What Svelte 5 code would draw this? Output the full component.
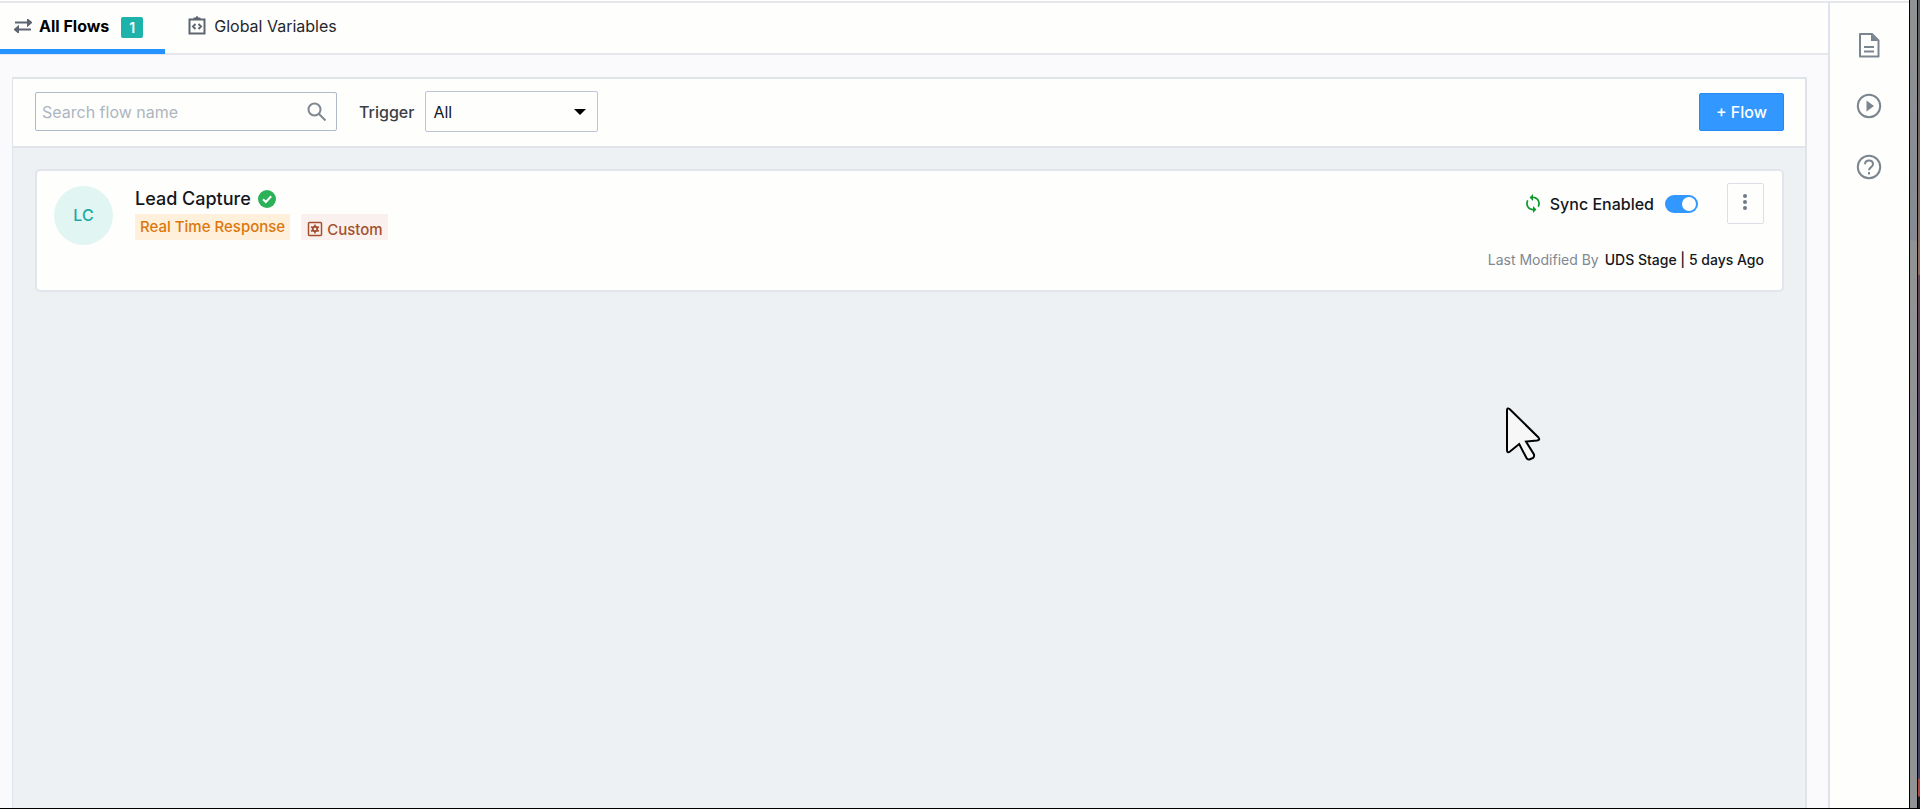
<script>
  let search = $state('');
  let trigger = $state('All');

  let flows = $state([
    {
      initials: 'LC',
      name: 'Lead Capture',
      response: 'Real Time Response',
      type: 'Custom',
      sync: true,
      author: 'UDS Stage',
      modified: '5 days Ago',
    },
  ]);
</script>

<div class="window">
  <div class="app">
    <main>
      <nav class="tabs">
        <a class="tab active" href="#flows">
          <svg class="icon-swap" viewBox="0 0 18 14" width="18" height="14" aria-hidden="true">
            <path d="M1 3.500h14M14 1 17 3.500 14 6zM17 10.500H3M4 8 1 10.500 4 13z" />
          </svg>
          All Flows
          <span class="count">{flows.length}</span>
        </a>
        <a class="tab" href="#variables">
          <svg class="icon-vars" viewBox="0 0 18 20" width="18" height="20" aria-hidden="true">
            <path d="M1.500 3.500h15v14h-15zM6.500 3.500V2.500h1.500L9 1.200l1 1.300h1.500v1M7.500 8 5 10.500 7.500 13M10.500 8 13 10.500 10.500 13" />
          </svg>
          Global Variables
        </a>
      </nav>

      <section class="panel">
        <div class="toolbar">
          <div class="search">
            <input type="text" placeholder="Search flow name" aria-label="Search flow name" bind:value={search} />
            <svg viewBox="0 0 20 20" width="20" height="20" aria-hidden="true">
              <circle cx="7.500" cy="7.500" r="6" />
              <path d="m12 12 6.500 6.500" />
            </svg>
          </div>
          <label for="trigger">Trigger</label>
          <div class="select">
            <select id="trigger" bind:value={trigger}>
              <option>All</option>
            </select>
            <svg viewBox="0 0 12 6" width="12" height="6" aria-hidden="true"><path d="M0 0h12L6 6z" /></svg>
          </div>
          <button class="add" type="button">+ Flow</button>
        </div>

        <div class="list">
          {#each flows as flow}
            <article class="card">
              <div class="avatar">{flow.initials}</div>
              <div class="info">
                <h2>
                  {flow.name}
                  <svg viewBox="0 0 18 18" width="18" height="18" role="img" aria-label="Active">
                    <circle cx="9" cy="9" r="9" fill="#2bb258" />
                    <path d="m5 9.200 2.800 2.800L13.200 6.300" fill="none" stroke="#fff" stroke-width="2" />
                  </svg>
                </h2>
                <div class="tags">
                  <span class="tag response">{flow.response}</span>
                  <span class="tag custom">
                    <svg viewBox="0 0 16 16" width="16" height="16" aria-hidden="true">
                      <rect x="1.500" y="1.500" width="13" height="13" rx="1" fill="none" stroke="currentColor" stroke-width="1.500" />
                      <circle cx="8" cy="8" r="2.300" fill="none" stroke="currentColor" stroke-width="1.800" />
                      <path d="M8 3.500v9M4.100 5.800l7.800 4.400M4.100 10.200l7.800-4.400" stroke="currentColor" stroke-width="1.600" />
                      <circle cx="8" cy="8" r="1.300" fill="#faf0ed" />
                    </svg>
                    {flow.type}
                  </span>
                </div>
              </div>
              <div class="side">
                <div class="actions">
                  <svg class="icon-sync" viewBox="4 1 16 22" width="14" height="19" aria-hidden="true">
                    <path d="M12 4V1L8 5l4 4V6c3.310 0 6 2.690 6 6 0 1.010-.250 1.970-.700 2.800l1.460 1.460A7.930 7.930 0 0 0 20 12c0-4.420-3.580-8-8-8zm0 14c-3.310 0-6-2.690-6-6 0-1.010.250-1.970.700-2.800L5.240 7.740A7.930 7.930 0 0 0 4 12c0 4.420 3.580 8 8 8v3l4-4-4-4v3z" />
                  </svg>
                  <label class="sync">
                    Sync Enabled
                    <input type="checkbox" role="switch" bind:checked={flow.sync} />
                  </label>
                  <button class="more" type="button" aria-label="More actions">
                    <svg viewBox="0 0 4 16" width="4" height="16" aria-hidden="true">
                      <circle cx="2" cy="2" r="2" /><circle cx="2" cy="8" r="2" /><circle cx="2" cy="14" r="2" />
                    </svg>
                  </button>
                </div>
                <p class="modified">Last Modified By <strong>{flow.author} | {flow.modified}</strong></p>
              </div>
            </article>
          {/each}
        </div>
      </section>
    </main>

    <aside class="rail">
      <button type="button" aria-label="Documentation">
        <svg viewBox="0 0 26 26" width="26" height="26" aria-hidden="true">
          <path d="M4 2h12l6.500 6.500v16H4zM8 15h10M8 19.500h10" />
          <path class="solid" d="M15 2v7h7z" />
        </svg>
      </button>
      <button type="button" aria-label="Videos">
        <svg viewBox="0 0 26 26" width="26" height="26" aria-hidden="true">
          <circle cx="13" cy="13" r="11.200" />
          <path class="solid" d="M10.500 7.500v11l7.500-5.500z" />
        </svg>
      </button>
      <button type="button" aria-label="Help">
        <svg viewBox="0 0 26 26" width="26" height="26" aria-hidden="true">
          <circle cx="13" cy="13" r="11.200" />
          <path d="M9 10.200c0-5 8-5 8 0 0 2.800-4 3-4 6M13 18v2.400" />
        </svg>
      </button>
    </aside>
  </div>
  <div class="frame"></div>
  <div class="desktop"></div>

  <svg class="cursor" viewBox="0 0 36 56" width="36" height="56" aria-hidden="true">
    <path d="M2 4.500Q2 1 4.800 3.300L33.500 31.500Q35.500 34 32 34.500L21 35.500 29 48.500Q29.500 50.500 28 52L24.500 53.500Q22.500 54 21.500 52L14.200 38 5 45.500Q2 47.500 2 44z" />
  </svg>
</div>

<style>
  :global(body) {
    font-family: Inter, 'Liberation Sans', sans-serif;
    font-size: 16px;
    color: #14161c;
    background: #fefefc;
  }

  .window {
    position: relative;
    display: flex;
    box-sizing: border-box;
    min-height: 100vh;
    border-bottom: 1px solid #000;
  }

  .app {
    flex: 1;
    display: flex;
    margin-top: 1px;
    border-top: 2px solid #e6e6ed;
  }

  main {
    flex: 1;
    display: flex;
    flex-direction: column;
    background: #fafafd;
  }

  .tabs {
    display: flex;
    height: 50px;
    background: #fefefc;
    border-bottom: 2px solid #e6e6ed;
  }

  .tab {
    display: flex;
    align-items: center;
    gap: 8px;
    box-sizing: border-box;
    height: 51px;
    padding: 0 22px 0 23px;
    border-bottom: 5px solid transparent;
    color: #25272e;
    text-decoration: none;
  }

  .tab.active {
    gap: 7px;
    padding-left: 14px;
    border-color: #2492ff;
    color: #000;
    font-weight: 700;
  }

  .tab svg {
    fill: none;
    stroke: #5d6670;
    stroke-width: 2;
  }

  .tab .icon-swap {
    fill: #5d6670;
    stroke-width: 2;
  }

  .count {
    margin: 2px 0 0 5px;
    padding: 0 8px;
    border-radius: 2px;
    background: #1db3aa;
    color: #fff;
    font-size: 14px;
    font-weight: 600;
    line-height: 21px;
  }

  .panel {
    flex: 1;
    display: flex;
    flex-direction: column;
    margin: 22px 21px 0 12px;
    border: solid #e0e4e9;
    border-width: 2px 2px 0 1px;
    background: #edf1f4;
  }

  .toolbar {
    display: flex;
    align-items: center;
    box-sizing: border-box;
    height: 69px;
    padding: 0 21px 2px 22px;
    background: #fefefc;
    border-bottom: 2px solid #e0e4e9;
  }

  .search {
    display: flex;
    align-items: center;
    box-sizing: border-box;
    width: 302px;
    height: 39px;
    padding: 0 9px 0 6px;
    border: 1px solid #aeb9c9;
    border-radius: 2px;
  }

  .search input {
    flex: 1;
    min-width: 0;
    padding: 0;
    border: 0;
    outline: 0;
    background: none;
    font: inherit;
  }

  .search input::placeholder {
    color: #adb5bf;
  }

  .search svg {
    fill: none;
    stroke: #7f8791;
    stroke-width: 2;
  }

  .toolbar label {
    margin: 0 11px 0 22px;
    color: #3a3e47;
    font-weight: 500;
  }

  .select {
    display: grid;
    align-items: center;
    width: 173px;
  }

  .select select,
  .select svg {
    grid-area: 1 / 1;
  }

  .select select {
    height: 41px;
    padding: 0 7px;
    appearance: none;
    border: 1px solid #b9c6d5;
    border-radius: 2px;
    background: none;
    color: #14161c;
    font: inherit;
  }

  .select svg {
    justify-self: end;
    margin-right: 12px;
    pointer-events: none;
  }

  .add {
    height: 38px;
    margin-left: auto;
    padding: 0 16px;
    border: 1px solid #2488f5;
    border-radius: 2px;
    background: #3297ff;
    color: #fff;
    font: 500 16px Inter, sans-serif;
  }

  .list {
    padding: 21px 21px 0 22px;
  }

  .card {
    display: flex;
    box-sizing: border-box;
    min-height: 121px;
    padding: 12px 18px 20px 17px;
    border: 2px solid #e2e5eb;
    border-radius: 5px;
    background: #fefefc;
  }

  .avatar {
    width: 59px;
    height: 59px;
    margin-top: 3px;
    border-radius: 50%;
    background: #e1f5f3;
    color: #1baaa6;
    font-weight: 500;
    line-height: 59px;
    text-align: center;
  }

  .info {
    margin-left: 22px;
  }

  h2 {
    display: flex;
    align-items: center;
    gap: 7px;
    margin: 5px 0 4px;
    font-size: 18px;
    font-weight: 500;
    line-height: 22px;
  }

  .tags {
    display: flex;
    gap: 11px;
  }

  .tag {
    display: flex;
    align-items: center;
    gap: 4px;
    box-sizing: border-box;
    height: 26px;
    padding: 0 5px;
    font-size: 15px;
    font-weight: 500;
  }

  .response {
    padding-bottom: 2px;
    background: #fff0db;
    color: #db770c;
  }

  .custom {
    padding: 4px 5px 0 6px;
    background: #faf0ed;
    color: #a4502f;
  }

  .side {
    margin-left: auto;
  }

  .actions {
    display: flex;
    align-items: center;
    justify-content: flex-end;
  }

  .icon-sync {
    margin-right: 10px;
    fill: #0c9a2b;
  }

  .sync {
    display: flex;
    align-items: center;
    gap: 11px;
    font-weight: 500;
  }

  .sync input {
    display: flex;
    align-items: center;
    justify-content: flex-start;
    width: 33px;
    height: 18px;
    margin: 0;
    padding: 2px;
    box-sizing: border-box;
    appearance: none;
    border-radius: 9px;
    background: #b3bcc6;
  }

  .sync input::before {
    content: '';
    width: 14px;
    height: 14px;
    border-radius: 50%;
    background: #fefefc;
  }

  .sync input:checked {
    justify-content: flex-end;
    background: #3297ff;
  }

  .more {
    display: grid;
    place-items: center;
    box-sizing: border-box;
    width: 37px;
    height: 41px;
    margin-left: 29px;
    padding: 0 2px 3px 0;
    border: 1px solid #dcdfe8;
    border-radius: 2px;
    background: none;
  }

  .more svg {
    fill: #727b85;
  }

  .modified {
    margin: 26px 0 0;
    color: #7f8893;
    font-size: 14px;
    line-height: 20px;
  }

  .modified strong {
    margin-left: 2px;
    color: #14161c;
    font-weight: 500;
  }

  .rail {
    display: flex;
    flex-direction: column;
    align-items: center;
    gap: 35px;
    box-sizing: border-box;
    width: 81px;
    padding: 29px 2px 0 0;
    border-left: 2px solid #dfe3ee;
  }

  .rail button {
    display: flex;
    padding: 0;
    border: 0;
    background: none;
  }

  .rail svg {
    fill: none;
    stroke: #7b858f;
    stroke-width: 2;
    stroke-linejoin: round;
  }

  .rail .solid {
    fill: #7b858f;
    stroke: none;
  }

  .frame {
    box-sizing: border-box;
    width: 9px;
    border: solid #000;
    border-width: 0 1px;
    background: linear-gradient(#919293, #858a92 240px, #919293 241px);
  }

  .desktop {
    width: 2px;
    background: linear-gradient(#555f63, #7d6a60 178px, #946a5c 274px, #6b4652 276px, #54405c 400px, #3e4266 600px, #3e4266 778px, #a84640 779px, #a84640 796px, #1b1c26 797px);
  }

  .cursor {
    position: absolute;
    top: 406px;
    left: 1505px;
    fill: #f6f7f6;
    stroke: #000;
    stroke-width: 2;
  }
</style>
